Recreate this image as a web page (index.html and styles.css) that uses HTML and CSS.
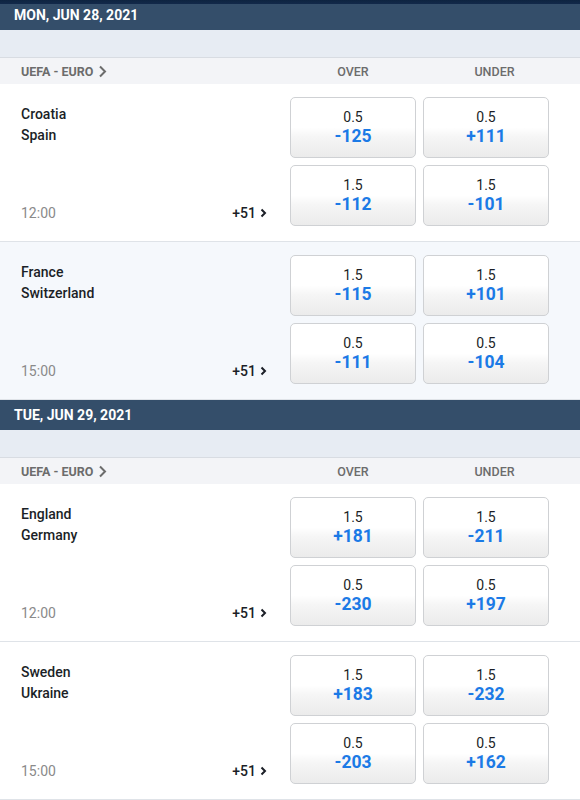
FILE: index.html
```html
<!DOCTYPE html>
<html>
<head>
<meta charset="utf-8">
<link rel="stylesheet" href="styles.css">
</head>
<body>
<div class="page">

  <div class="day first">MON, JUN 28, 2021</div>
  <div class="band"></div>
  <div class="league">
    <div class="league-name">UEFA - EURO <svg class="chev-l" width="9" height="13" viewBox="0 0 9 13"><path d="M2 1.5 L7 6.5 L2 11.5" fill="none" stroke="#6c6c6c" stroke-width="2"/></svg></div>
    <div class="col-label">OVER</div>
    <div class="col-label under">UNDER</div>
  </div>

  <div class="match">
    <div class="info">
      <div class="teams"><div>Croatia</div><div>Spain</div></div>
      <div class="meta"><span class="time">12:00</span><span class="more">+51 <svg width="7" height="10" viewBox="0 0 7 10"><path d="M1.5 1.5 L5 5 L1.5 8.5" fill="none" stroke="#1b1f27" stroke-width="2"/></svg></span></div>
    </div>
    <div class="odds">
      <div class="btn"><span class="line">0.5</span><span class="price">-125</span></div>
      <div class="btn"><span class="line">0.5</span><span class="price">+111</span></div>
      <div class="btn"><span class="line">1.5</span><span class="price">-112</span></div>
      <div class="btn"><span class="line">1.5</span><span class="price">-101</span></div>
    </div>
  </div>

  <div class="match alt">
    <div class="info">
      <div class="teams"><div>France</div><div>Switzerland</div></div>
      <div class="meta"><span class="time">15:00</span><span class="more">+51 <svg width="7" height="10" viewBox="0 0 7 10"><path d="M1.5 1.5 L5 5 L1.5 8.5" fill="none" stroke="#1b1f27" stroke-width="2"/></svg></span></div>
    </div>
    <div class="odds">
      <div class="btn"><span class="line">1.5</span><span class="price">-115</span></div>
      <div class="btn"><span class="line">1.5</span><span class="price">+101</span></div>
      <div class="btn"><span class="line">0.5</span><span class="price">-111</span></div>
      <div class="btn"><span class="line">0.5</span><span class="price">-104</span></div>
    </div>
  </div>

  <div class="day">TUE, JUN 29, 2021</div>
  <div class="band"></div>
  <div class="league">
    <div class="league-name">UEFA - EURO <svg class="chev-l" width="9" height="13" viewBox="0 0 9 13"><path d="M2 1.5 L7 6.5 L2 11.5" fill="none" stroke="#6c6c6c" stroke-width="2"/></svg></div>
    <div class="col-label">OVER</div>
    <div class="col-label under">UNDER</div>
  </div>

  <div class="match">
    <div class="info">
      <div class="teams"><div>England</div><div>Germany</div></div>
      <div class="meta"><span class="time">12:00</span><span class="more">+51 <svg width="7" height="10" viewBox="0 0 7 10"><path d="M1.5 1.5 L5 5 L1.5 8.5" fill="none" stroke="#1b1f27" stroke-width="2"/></svg></span></div>
    </div>
    <div class="odds">
      <div class="btn"><span class="line">1.5</span><span class="price">+181</span></div>
      <div class="btn"><span class="line">1.5</span><span class="price">-211</span></div>
      <div class="btn"><span class="line">0.5</span><span class="price">-230</span></div>
      <div class="btn"><span class="line">0.5</span><span class="price">+197</span></div>
    </div>
  </div>

  <div class="match">
    <div class="info">
      <div class="teams"><div>Sweden</div><div>Ukraine</div></div>
      <div class="meta"><span class="time">15:00</span><span class="more">+51 <svg width="7" height="10" viewBox="0 0 7 10"><path d="M1.5 1.5 L5 5 L1.5 8.5" fill="none" stroke="#1b1f27" stroke-width="2"/></svg></span></div>
    </div>
    <div class="odds">
      <div class="btn"><span class="line">1.5</span><span class="price">+183</span></div>
      <div class="btn"><span class="line">1.5</span><span class="price">-232</span></div>
      <div class="btn"><span class="line">0.5</span><span class="price">-203</span></div>
      <div class="btn"><span class="line">0.5</span><span class="price">+162</span></div>
    </div>
  </div>

</div>
</body>
</html>
```

FILE: styles.css
```css
* { box-sizing: border-box; }
html, body { margin: 0; padding: 0; }
body {
  font-family: Roboto, "Liberation Sans", sans-serif;
  background: #ffffff;
  width: 580px;
  overflow: hidden;
}
.page { width: 580px; }

.day {
  height: 30px;
  background: #344e6a;
  color: #ffffff;
  font-weight: 700;
  font-size: 14px;
  line-height: 30px;
  padding-left: 14px;
}
.day.first {
  background: linear-gradient(to bottom, #0e2440 0, #12294a 4px, #344e6a 4px);
}

.band {
  height: 28px;
  background: #e7ecf3;
  border-bottom: 1px solid #d8dce2;
}

.league {
  height: 26px;
  background: #f3f4f7;
  display: grid;
  grid-template-columns: 1fr 126px 126px;
  column-gap: 7px;
  padding: 1px 31px 0 21px;
  align-items: center;
  font-size: 12.5px;
  font-weight: 500;
  color: #6c6c6c;
}
.league-name {
  font-weight: 700;
  display: flex;
  align-items: center;
  gap: 5px;
}
.col-label { text-align: center; }
.col-label.under { padding-left: 17px; }

.match {
  display: grid;
  grid-template-columns: 1fr 259px;
  padding: 13px 31px 15px 21px;
  border-bottom: 1px solid #dfe3e8;
  background: #ffffff;
}
.match.alt { background: #f5f8fc; }

.info {
  display: flex;
  flex-direction: column;
  justify-content: space-between;
  padding: 7px 23px 3px 0;
}
.teams {
  font-size: 14px;
  font-weight: 500;
  line-height: 21px;
  color: #1b1f27;
}
.meta {
  display: flex;
  justify-content: space-between;
  align-items: center;
  line-height: 20px;
}
.time {
  font-size: 14px;
  color: #8a8a8a;
}
.more {
  font-size: 14px;
  font-weight: 500;
  color: #1b1f27;
  display: flex;
  align-items: center;
  gap: 4px;
}

.odds {
  display: grid;
  grid-template-columns: 126px 126px;
  grid-auto-rows: 61px;
  gap: 7px;
}
.btn {
  border: 1px solid #cfd1d4;
  border-radius: 5px;
  background: linear-gradient(to bottom, #ffffff 0, #ffffff 50%, #f6f6f6 65%, #ebebeb 100%);
  display: flex;
  flex-direction: column;
  align-items: center;
  justify-content: center;
}
.line {
  font-size: 14px;
  line-height: 17px;
  color: #1b1f27;
}
.price {
  font-size: 17.5px;
  font-weight: 700;
  line-height: 20px;
  color: #1b7ae6;
}
```
